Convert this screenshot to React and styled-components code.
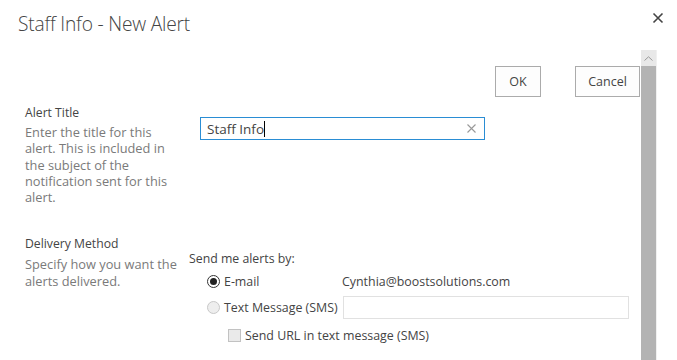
import React from 'react';
import styled, {createGlobalStyle} from 'styled-components';

const GlobalStyle = createGlobalStyle`
  html, body {
    margin: 0;
    padding: 0;
    background: #fff;
  }
  body {
    font-family: "Segoe UI", "Open Sans", "Noto Sans", sans-serif;
    color: #444;
    overflow: hidden;
  }
`;

const Dialog = styled.div`
  width: 677px;
  height: 360px;
  display: flex;
  flex-direction: column;
  overflow: hidden;
`;

const Header = styled.div`
  height: 50px;
  display: flex;
  align-items: flex-start;
  justify-content: space-between;
`;

const Title = styled.h1`
  margin: 11px 0 0 18px;
  font-size: 19.2px;
  font-weight: 300;
  color: #444;
  letter-spacing: -0.2px;
  line-height: 26px;
`;

const CloseButton = styled.button`
  margin: 12px 13px 0 0;
  width: 12px;
  height: 12px;
  padding: 0;
  border: 0;
  background: none;
  display: flex;
  svg {
    width: 12px;
    height: 12px;
  }
`;

const Body = styled.div`
  flex: 1;
  display: flex;
  min-height: 0;
`;

const Content = styled.div`
  width: 641px;
  flex: none;
`;

const Toolbar = styled.div`
  display: flex;
  justify-content: flex-end;
  gap: 34px;
  padding: 16px 1px 0 0;
  height: 31px;
`;

const Button = styled.button`
  width: ${p => p.$width}px;
  height: 31px;
  border: 1px solid #ababab;
  background: #fdfdfd;
  font-family: inherit;
  font-size: 12.5px;
  color: #444;
  padding: 0;
`;

const Section = styled.div`
  display: flex;
  margin-top: ${p => p.$top}px;
`;

const Aside = styled.div`
  box-sizing: border-box;
  width: ${p => p.$width}px;
  padding-left: 25px;
  flex: none;
`;

const Label = styled.div`
  font-size: 12.2px;
  line-height: 18px;
  color: #444;
`;

const Description = styled.div`
  margin-top: ${p => p.$top}px;
  font-size: 12.8px;
  line-height: 16.3px;
  color: #7a7a7a;
  white-space: nowrap;
`;

const Field = styled.div`
  flex: 1;
  padding-top: ${p => p.$top}px;
`;

const TextBox = styled.div`
  width: 285px;
  height: 23px;
  box-sizing: border-box;
  border: 1px solid #2a8dd4;
  display: flex;
  align-items: center;
  padding: 0 8px 0 6px;
  font-size: 13.5px;
  color: #444;
`;

const Caret = styled.span`
  display: inline-block;
  width: 1px;
  height: 16px;
  background: #000;
  vertical-align: middle;
`;

const Grow = styled.span`
  flex: 1;
`;

const Prompt = styled.div`
  font-size: 12.3px;
  line-height: 18px;
  color: #444;
`;

const OptionRow = styled.div`
  display: flex;
  align-items: center;
  height: ${p => p.$height}px;
  padding-left: ${p => p.$indent}px;
  font-size: 12.4px;
  color: #444;
`;

const Radio = styled.span`
  width: 11px;
  height: 11px;
  border-radius: 50%;
  border: 1px solid ${p => (p.$checked ? '#333' : '#c8c8c8')};
  background: ${p => (p.$checked ? '#fff' : '#eee')};
  display: flex;
  align-items: center;
  justify-content: center;
  margin-right: 4px;
  flex: none;
  &::after {
    content: '';
    display: ${p => (p.$checked ? 'block' : 'none')};
    width: 7px;
    height: 7px;
    border-radius: 50%;
    background: #222;
  }
`;

const Check = styled.span`
  width: 11px;
  height: 11px;
  border: 1px solid #c2c2c2;
  background: #eaeaea;
  margin-right: 4px;
  flex: none;
`;

const OptionText = styled.span`
  width: ${p => (p.$width ? p.$width + 'px' : 'auto')};
  flex: none;
`;

const PhoneBox = styled.div`
  width: 286px;
  height: 23px;
  box-sizing: border-box;
  border: 1px solid #e1e1e1;
  margin-left: 4px;
`;

const Scrollbar = styled.div`
  width: 15px;
  flex: none;
  display: flex;
  flex-direction: column;
  border-right: 1px solid #f0f0f0;
`;

const ScrollArrow = styled.div`
  height: 16px;
  background: #e8e8e8;
  display: flex;
  justify-content: center;
  align-items: center;
`;

const ScrollThumb = styled.div`
  flex: 1;
  background: #b3b3b3;
`;

export default function App() {
  return (
    <>
      <GlobalStyle />
      <Dialog>
        <Header>
          <Title>Staff Info - New Alert</Title>
          <CloseButton aria-label="Close">
            <svg viewBox="0 0 12 12">
              <path d="M1.5 1.5 L10.5 10.5 M10.5 1.5 L1.5 10.5" stroke="#444" strokeWidth="1.6" fill="none" />
            </svg>
          </CloseButton>
        </Header>
        <Body>
          <Content>
            <Toolbar>
              <Button $width={46}>OK</Button>
              <Button $width={65}>Cancel</Button>
            </Toolbar>
            <Section $top={7}>
              <Aside $width={200}>
                <Label>Alert Title</Label>
                <Description $top={2}>
                  Enter the title for this<br />
                  alert. This is included in<br />
                  the subject of the<br />
                  notification sent for this<br />
                  alert.
                </Description>
              </Aside>
              <Field $top={13}>
                <TextBox>
                  <span>Staff Info</span>
                  <Caret />
                  <Grow />
                  <svg width="9" height="9" viewBox="0 0 9 9">
                    <path d="M0.5 0.5 L8.5 8.5 M8.5 0.5 L0.5 8.5" stroke="#999" strokeWidth="1.1" fill="none" />
                  </svg>
                </TextBox>
              </Field>
            </Section>
            <Section $top={30}>
              <Aside $width={189}>
                <Label>Delivery Method</Label>
                <Description $top={3}>
                  Specify how you want the<br />
                  alerts delivered.
                </Description>
              </Aside>
              <Field $top={15}>
                <Prompt>Send me alerts by:</Prompt>
                <OptionRow $height={26} $indent={18}>
                  <Radio $checked />
                  <OptionText $width={118}>E-mail</OptionText>
                  <span>Cynthia@boostsolutions.com</span>
                </OptionRow>
                <OptionRow $height={26} $indent={18}>
                  <Radio />
                  <OptionText $width={115}>Text Message (SMS)</OptionText>
                  <PhoneBox />
                </OptionRow>
                <OptionRow $height={30} $indent={39}>
                  <Check />
                  <OptionText>Send URL in text message (SMS)</OptionText>
                </OptionRow>
              </Field>
            </Section>
          </Content>
          <Scrollbar>
            <ScrollArrow>
              <svg width="9" height="5" viewBox="0 0 9 5">
                <path d="M0.5 4.5 L4.5 0.8 L8.5 4.5" stroke="#999" strokeWidth="1" fill="none" />
              </svg>
            </ScrollArrow>
            <ScrollThumb />
          </Scrollbar>
        </Body>
      </Dialog>
    </>
  );
}
